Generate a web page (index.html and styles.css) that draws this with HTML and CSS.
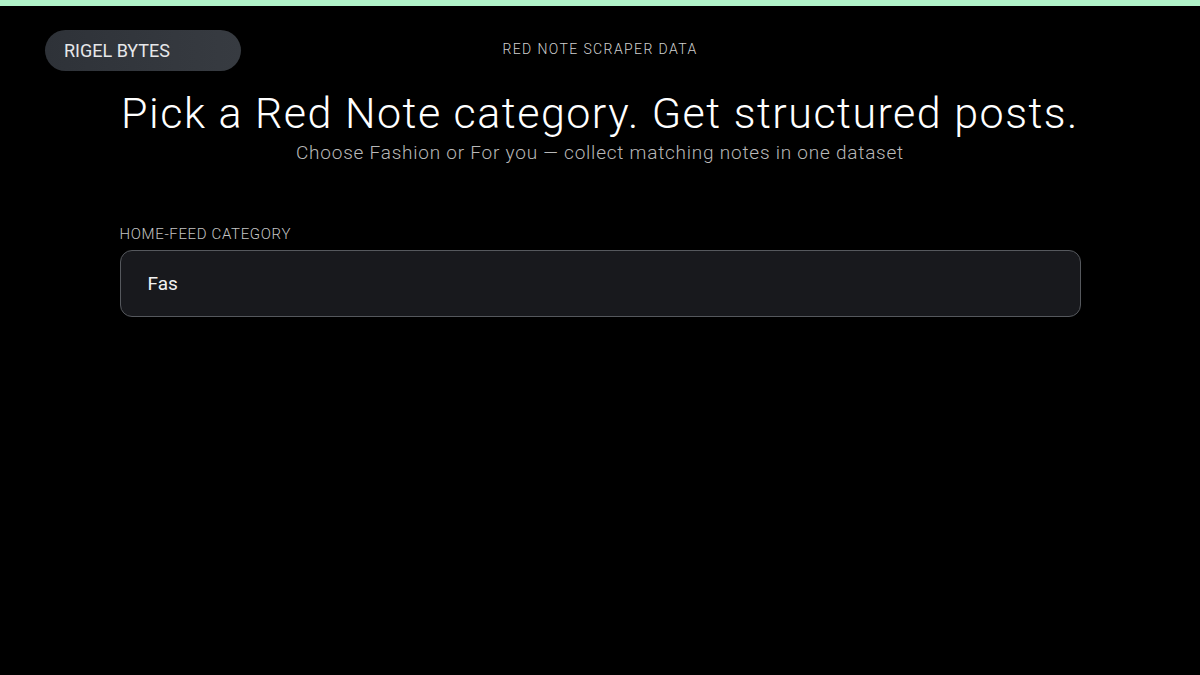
FILE: index.html
```html
<!DOCTYPE html>
<html lang="en">
<head>
<meta charset="utf-8">
<title>Red Note Scraper Data</title>
<link rel="stylesheet" href="styles.css">
</head>
<body>
<div class="topbar"></div>
<header class="header">
  <div class="brand">RIGEL BYTES</div>
  <div class="eyebrow">RED NOTE SCRAPER DATA</div>
  <div class="spacer"></div>
</header>
<section class="hero">
  <h1 class="title">Pick a Red Note category. Get structured posts.</h1>
  <p class="subtitle">Choose Fashion or For you — collect matching notes in one dataset</p>
</section>
<main class="form">
  <label class="label" for="cat">HOME-FEED CATEGORY</label>
  <div class="input">Fas</div>
</main>
</body>
</html>
```
FILE: styles.css
```css
html, body {
  margin: 0;
  padding: 0;
  background: #000;
  color: #fff;
  font-family: Roboto, "Liberation Sans", sans-serif;
}
.topbar {
  height: 6px;
  background: #b1f2c9;
}
.header {
  display: grid;
  grid-template-columns: 1fr auto 1fr;
  align-items: start;
  padding: 24px 45px 0;
}
.brand {
  justify-self: start;
  width: 196px;
  height: 41px;
  box-sizing: border-box;
  padding-left: 19px;
  display: flex;
  align-items: center;
  border-radius: 21px;
  background: linear-gradient(90deg, #2e3238, #373b41);
  color: #e6e7e9;
  font-size: 18px;
}
.eyebrow {
  padding-top: 11px;
  font-size: 14px;
  font-weight: 300;
  color: #d0d0d0;
  letter-spacing: 1.4px;
}
.hero {
  text-align: center;
  margin-top: 16px;
}
.title {
  margin: 0;
  font-weight: 300;
  font-size: 43px;
  line-height: 52px;
  letter-spacing: 1.5px;
  color: #fff;
}
.subtitle {
  margin: 2px 0 0;
  font-size: 19px;
  font-weight: 300;
  line-height: 24px;
  letter-spacing: 0.77px;
  color: #b8b8b8;
}
.form {
  width: 961px;
  margin: 60px auto 0;
}
.label {
  display: block;
  font-size: 15px;
  font-weight: 300;
  letter-spacing: 0.65px;
  color: #c4c4c4;
  margin-bottom: 7px;
}
.input {
  height: 67px;
  box-sizing: border-box;
  border: 1px solid #55585d;
  border-radius: 12px;
  background: #18191d;
  padding-left: 27px;
  display: flex;
  align-items: center;
  font-size: 19px;
  color: #f2f2f2;
}
```
